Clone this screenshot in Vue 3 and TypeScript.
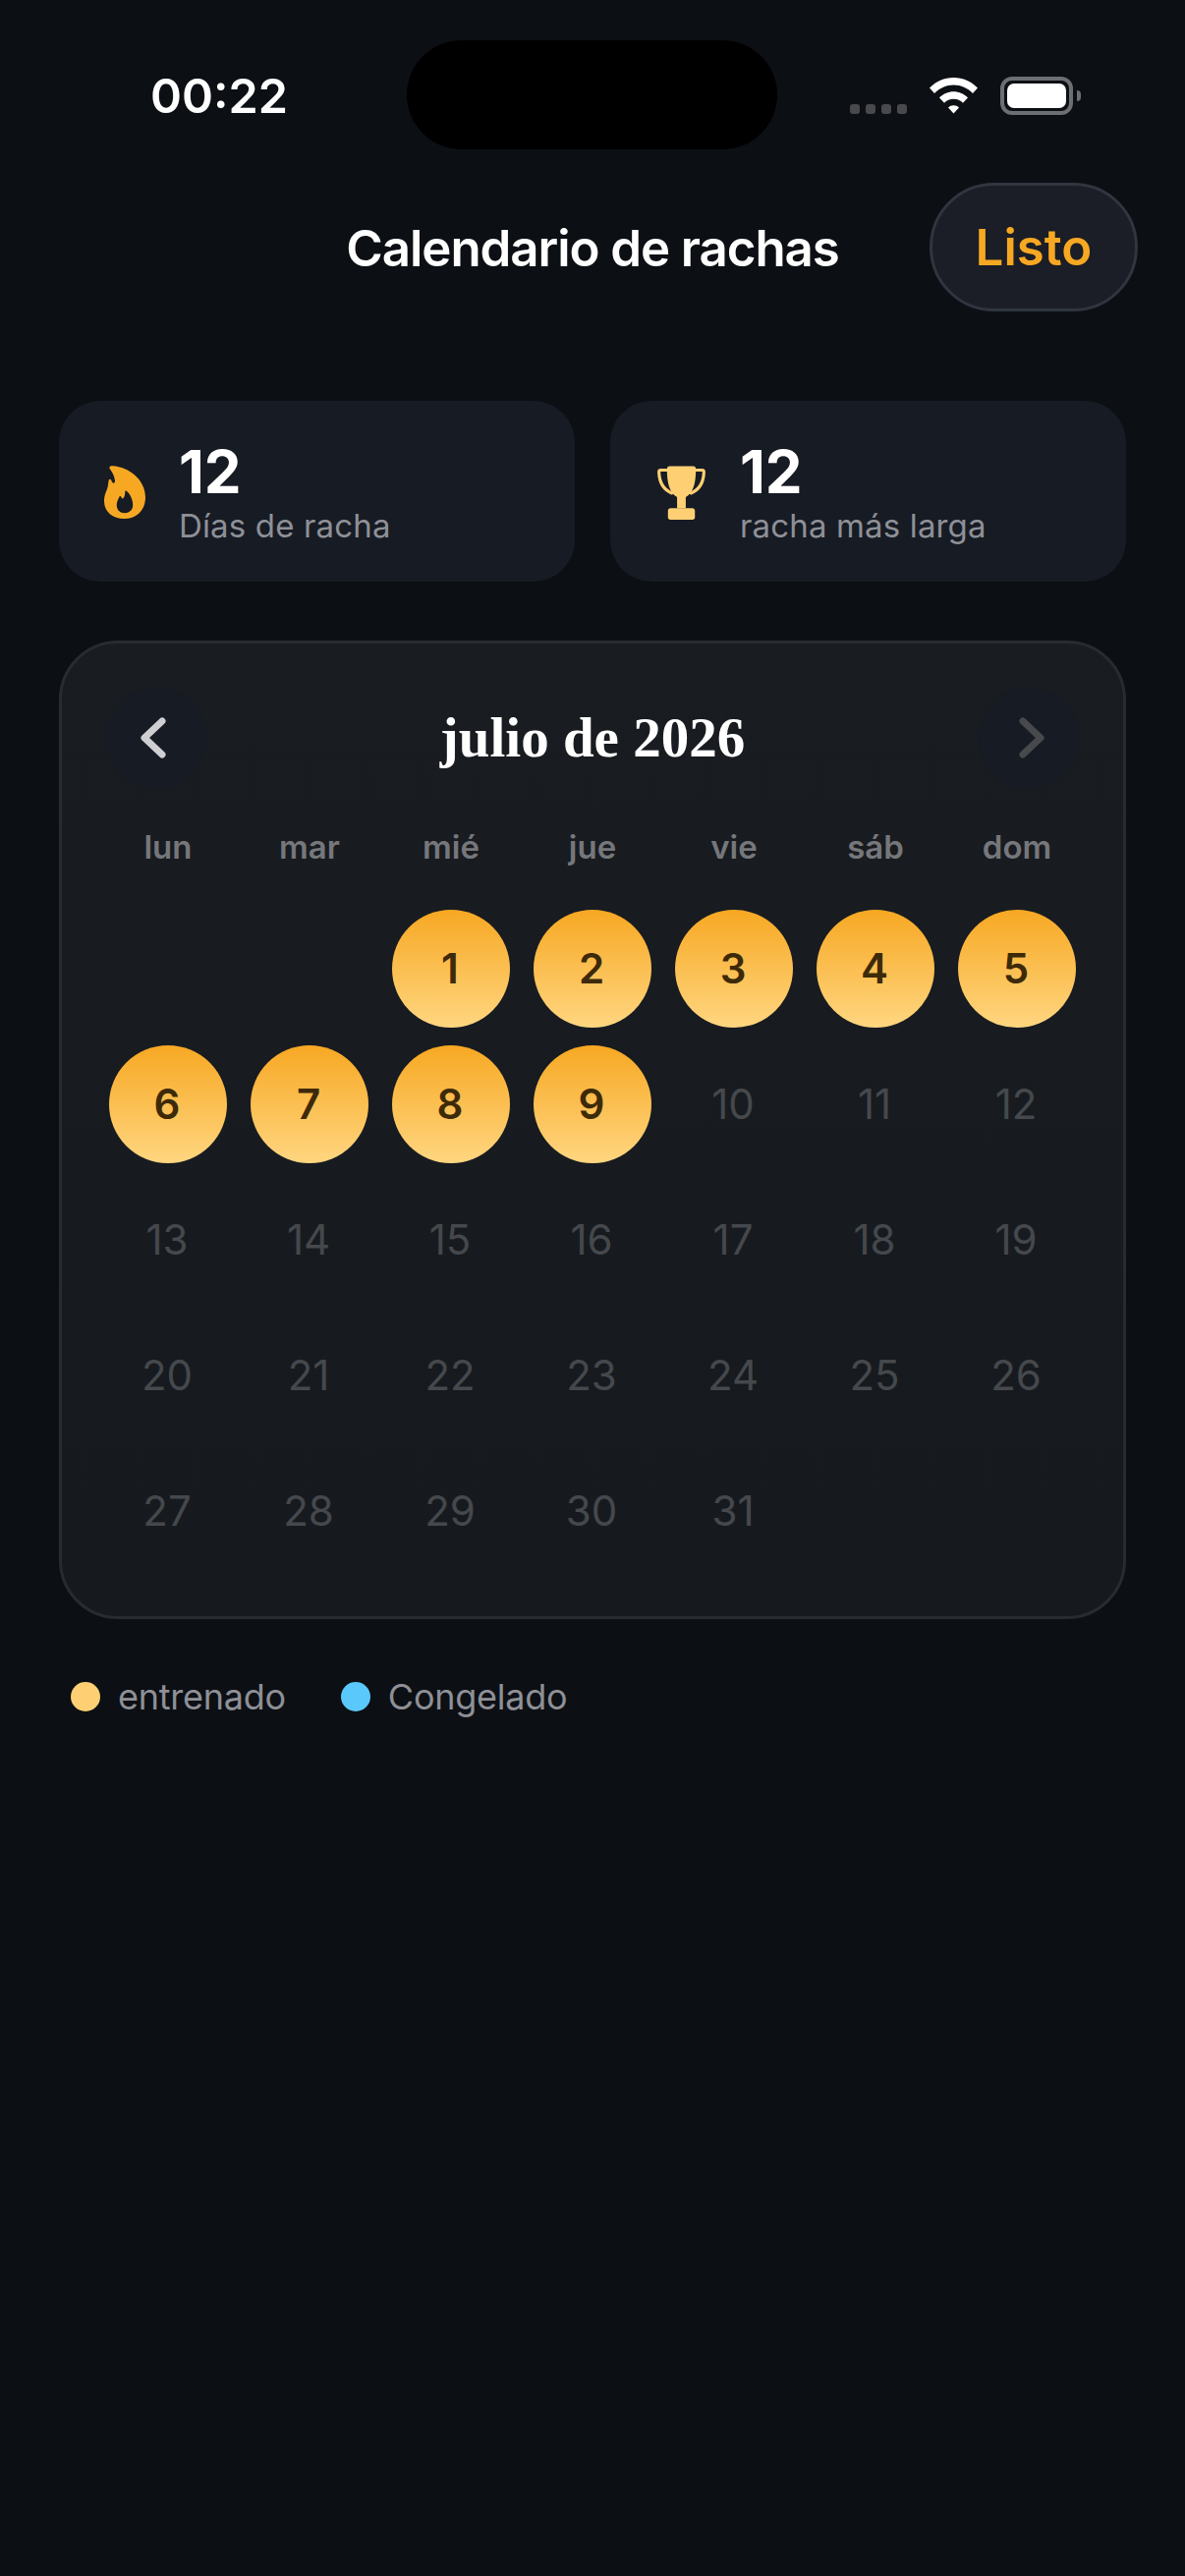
<script setup lang="ts">
const weekdays: string[] = ['lun', 'mar', 'mié', 'jue', 'vie', 'sáb', 'dom']
const trained = 9
const days: (number | null)[] = [null, null, ...Array.from({ length: 31 }, (_, i) => i + 1)]
</script>

<template>
  <main class="screen">
    <div class="island"></div>

    <header class="status">
      <span class="time">00:22</span>
      <div class="status-icons">
        <div class="signal"><i></i><i></i><i></i><i></i></div>
        <svg class="wifi" width="51" height="38" viewBox="0 0 50 38">
          <path d="M0.500 11.500C7 5 15.500 1 25 1s18 4 24.500 10.500l-5 5.500C39 11.500 32.500 8.500 25 8.500S11 11.500 5.500 17z" fill="#fff" />
          <path d="M10.500 21.500C14.200 17.800 19.300 15.300 25 15.300s10.800 2.500 14.500 6.200l-5 5.300C32 24.300 28.700 22.800 25 22.800s-7 1.500-9.500 4z" fill="#fff" />
          <path d="M19.500 31.500c1.500-1.400 3.400-2.200 5.500-2.200s4 .8 5.500 2.200L25 37.500z" fill="#fff" />
        </svg>
        <div class="battery"><div class="battery-fill"></div></div>
        <div class="battery-cap"></div>
      </div>
    </header>

    <div class="navbar">
      <h1 class="title">Calendario de rachas</h1>
      <button class="listo">Listo</button>
    </div>

    <section class="stats">
      <article class="stat">
        <svg class="stat-icon" width="42" height="54" viewBox="0 0 46 56" preserveAspectRatio="none">
          <path fill-rule="evenodd" fill="#F7A823" d="M7 0.500C6 1 5.500 2 6.200 3.200 8.500 6.500 11.500 10.500 12 15.500 12.200 17.500 11.500 18.800 10 18.300 8.800 17.900 8.300 16 7.600 14.800 7 13.800 5.800 14 5.300 15 4.500 17 4.800 20 3.800 23 2.500 27.200 0 31 0 37.500 0 48.500 9.500 56 22.500 56 35.500 56 46 47.500 46 33.500 46 15 28 1.500 9.500 0.300 8.600 0.200 7.700 0.200 7 0.500ZM24.500 26.500C23.600 26.300 23.200 27 23.300 27.800 23.500 29.800 22.700 32.800 21.400 34.300 20.800 35 20 34.800 19.500 34 19.200 33.400 18.800 32.300 18.100 32.200 17.400 32.100 17 32.700 16.700 33.400 15.300 36 14 38.600 14 41.800 14 47 17.800 50 22.800 50 27.800 50 32 47 32 41.500 32 35.500 28.500 29 24.500 26.500Z" />
        </svg>
        <div class="stat-text">
          <strong class="stat-value">12</strong>
          <span class="stat-label">Días de racha</span>
        </div>
      </article>
      <article class="stat">
        <svg class="stat-icon trophy" width="49" height="55" viewBox="0 0 50 56">
          <path fill="none" stroke="#FFD073" stroke-width="3.200" stroke-linecap="round" d="M10 4.500H3.500C2 4.500 1.600 5.500 1.700 7 2 16 4.500 24 15 28.500M40 4.500h6.500c1.500 0 1.900 1 1.800 2.500C48 16 45.500 24 35 28.500" />
          <path fill="#FFD073" d="M13 0.500h24c2 0 3 1 3 3C40 16 38 28 29.500 32.500V44h-9V32.500C12 28 10 16 10 3.500c0-2 1-3 3-3Z" />
          <path fill="#FFD073" d="M14 44h22c2 0 3 1 3 3v6.500c0 1.500-1 2.500-2.500 2.500h-23C12 56 11 55 11 53.500V47c0-2 1-3 3-3Z" />
        </svg>
        <div class="stat-text">
          <strong class="stat-value">12</strong>
          <span class="stat-label">racha más larga</span>
        </div>
      </article>
    </section>

    <section class="calendar">
      <div class="cal-head">
        <button class="arrow">
          <svg class="chev-prev" width="28" height="42" viewBox="0 0 28 42"><path d="M23 4 5 21l18 17" fill="none" stroke="#CFCFD1" stroke-width="7" stroke-linecap="round" stroke-linejoin="round" /></svg>
        </button>
        <h2 class="month">julio de 2026</h2>
        <button class="arrow">
          <svg class="chev-next" width="28" height="42" viewBox="0 0 28 42"><path d="M5 4l18 17L5 38" fill="none" stroke="#48494D" stroke-width="7" stroke-linecap="round" stroke-linejoin="round" /></svg>
        </button>
      </div>

      <div class="weekdays">
        <span v-for="w in weekdays" :key="w" class="weekday">{{ w }}</span>
      </div>

      <div class="days">
        <div
          v-for="(d, i) in days"
          :key="i"
          class="day"
          :class="{ trained: d !== null && d <= trained }"
        >{{ d }}</div>
      </div>
    </section>

    <footer class="legend">
      <div class="legend-item"><i class="dot amber"></i><span>entrenado</span></div>
      <div class="legend-item"><i class="dot blue"></i><span>Congelado</span></div>
    </footer>
  </main>
</template>

<style>
html, body { margin: 0; background: #0c0f14; }
</style>

<style scoped>
.screen {
  position: relative;
  width: 1206px;
  height: 2622px;
  box-sizing: border-box;
  padding: 0 60px;
  background: #0c0f14;
  color: #fff;
  font-family: Inter, "Noto Sans", sans-serif;
  overflow: hidden;
}
.island {
  position: absolute;
  left: 414px;
  top: 41px;
  width: 377px;
  height: 111px;
  border-radius: 56px;
  background: #000;
}
.status {
  height: 186px;
  box-sizing: border-box;
  padding: 68px 46px 0 93px;
  display: flex;
  justify-content: space-between;
  align-items: flex-start;
}
.time {
  font-size: 48.500px;
  line-height: 60px;
  font-weight: 600;
}
.status-icons {
  display: flex;
  align-items: flex-end;
  height: 39px;
  margin-top: 10px;
}
.signal { display: flex; gap: 6px; margin-right: 22px; margin-bottom: 1px; }
.signal i { width: 10px; height: 10px; border-radius: 3px; background: #48494d; display: block; }
.wifi { margin-right: 22px; margin-bottom: 1px; }
.battery {
  width: 74px;
  height: 39px;
  box-sizing: border-box;
  border: 4px solid #6d6f73;
  border-radius: 12px;
  padding: 3px;
}
.battery-fill { width: 100%; height: 100%; background: #fff; border-radius: 7px; }
.battery-cap { width: 4px; height: 11px; background: #6d6f73; border-radius: 0 4px 4px 0; margin: 0 0 14px 4px; }
.navbar {
  position: relative;
  height: 131px;
  display: flex;
  align-items: center;
  justify-content: center;
  margin-bottom: 91px;
}
.title {
  margin: 2px 0 0;
  font-size: 51px;
  font-weight: 600;
  letter-spacing: -1.070px;
}
.listo {
  position: absolute;
  right: -12px;
  top: 0;
  width: 212px;
  height: 131px;
  box-sizing: border-box;
  border: 3px solid #30353f;
  border-radius: 66px;
  background: #1b1e26;
  color: #f7a823;
  font: 600 51px Inter, sans-serif;
  padding: 0;
}
.stats { display: flex; gap: 36px; margin-bottom: 60px; }
.stat {
  flex: 1;
  height: 184px;
  box-sizing: border-box;
  padding: 0 0 0 46px;
  border-radius: 42px;
  background: #171b24;
  display: flex;
  align-items: center;
  gap: 34px;
}
.stat-icon { flex: none; margin-top: 2px; }
.stat-icon.trophy { margin-left: 2px; margin-right: 1px; }
.stat-text { display: flex; flex-direction: column; padding-top: 2px; }
.stat-value { font-size: 60px; line-height: 64px; font-weight: 700; margin-bottom: 3px; }
.stat-label { font-size: 33px; line-height: 40px; color: #8e9096; letter-spacing: 0.150px; }
.calendar {
  height: 996px;
  box-sizing: border-box;
  border: 3px solid #282b31;
  border-radius: 60px;
  background: linear-gradient(180deg, #191c20, #161a1f);
  padding: 45px 48px 0;
}
.cal-head {
  display: flex;
  align-items: center;
  justify-content: space-between;
  margin-bottom: 36px;
}
.arrow {
  width: 102px;
  height: 102px;
  margin-left: -3px;
  margin-right: -3px;
  padding: 0;
  border: 0;
  border-radius: 50%;
  background: #171b24;
  display: flex;
  align-items: center;
  justify-content: center;
}
.chev-prev { margin-right: 7px; }
.chev-next { margin-left: 7px; }
.month {
  margin: 0;
  font-family: "Liberation Serif", serif;
  font-size: 57px;
  font-weight: 700;
  line-height: 70px;
}
.weekdays {
  display: grid;
  grid-template-columns: repeat(7, 120px);
  column-gap: 24px;
  margin-bottom: 40px;
}
.weekday {
  text-align: center;
  font-size: 33px;
  line-height: 48px;
  font-weight: 600;
  color: #76777b;
}
.days {
  display: grid;
  grid-template-columns: repeat(7, 120px);
  grid-auto-rows: 120px;
  gap: 18px 24px;
}
.day {
  display: flex;
  align-items: center;
  justify-content: center;
  box-sizing: border-box;
  padding: 0 2px 2px 0;
  border-radius: 50%;
  font-size: 42px;
  color: #45484c;
}
.day.trained {
  background: linear-gradient(180deg, #f7a823, #ffd680);
  color: #3d2a08;
  font-weight: 600;
}
.legend { display: flex; gap: 56px; margin-top: 57px; padding-left: 12px; }
.legend-item { display: flex; align-items: center; gap: 18px; font-size: 36px; line-height: 44px; color: #8e9096; letter-spacing: -0.250px; }
.dot { width: 30px; height: 30px; border-radius: 50%; display: block; }
.amber { background: #ffd073; }
.blue { background: #5ac8fa; }
</style>
